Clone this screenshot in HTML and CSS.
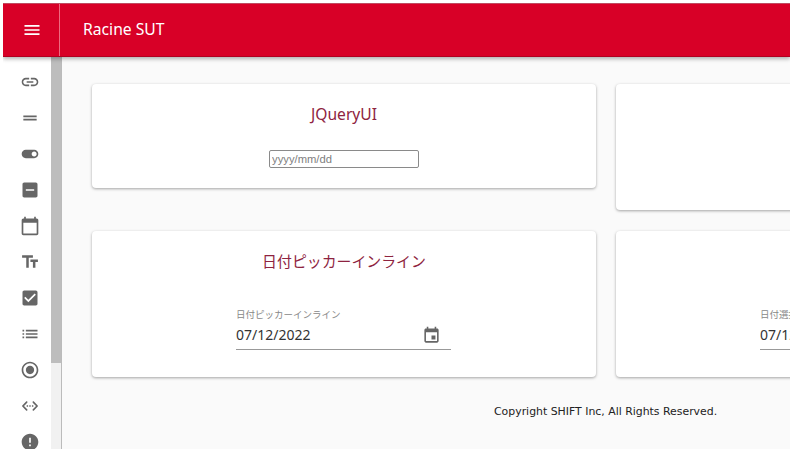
FILE: index.html
```html
<!DOCTYPE html>
<html lang="ja">
<head>
<meta charset="utf-8">
<title>Racine SUT</title>
<link rel="stylesheet" href="styles.css">
</head>
<body>
<div class="window">
  <header class="toolbar">
    <div class="menu-cell">
      <svg class="menu-icon" viewBox="0 0 24 24"><path d="M3 18h18v-2H3v2zm0-5h18v-2H3v2zm0-7v2h18V6H3z"/></svg>
    </div>
    <div class="brand">Racine SUT</div>
  </header>
  <div class="body">
    <nav class="nav">
      <svg class="nav-icon" viewBox="0 0 24 24"><path d="M3.9 12c0-1.71 1.39-3.1 3.1-3.1h4V7H7c-2.76 0-5 2.24-5 5s2.24 5 5 5h4v-1.9H7c-1.71 0-3.1-1.39-3.1-3.1zM8 13h8v-2H8v2zm9-6h-4v1.9h4c1.71 0 3.1 1.39 3.1 3.1s-1.39 3.1-3.1 3.1h-4V17h4c2.76 0 5-2.24 5-5s-2.24-5-5-5z"/></svg>
      <svg class="nav-icon" viewBox="0 0 24 24"><path d="M4 9h16v2H4zm0 4h16v2H4z"/></svg>
      <svg class="nav-icon" viewBox="0 0 24 24"><path d="M17 7H7c-2.76 0-5 2.24-5 5s2.24 5 5 5h10c2.76 0 5-2.24 5-5s-2.24-5-5-5zm0 8c-1.66 0-3-1.34-3-3s1.34-3 3-3 3 1.34 3 3-1.34 3-3 3z"/></svg>
      <svg class="nav-icon" viewBox="0 0 24 24"><path d="M19 3H5c-1.1 0-2 .9-2 2v14c0 1.1.9 2 2 2h14c1.1 0 2-.9 2-2V5c0-1.1-.9-2-2-2zm-2 10H7v-2h10v2z"/></svg>
      <svg class="nav-icon" viewBox="0 0 24 24"><path d="M20 3h-1V1h-2v2H7V1H5v2H4c-1.1 0-2 .9-2 2v16c0 1.1.9 2 2 2h16c1.1 0 2-.9 2-2V5c0-1.1-.9-2-2-2zm0 18H4V8h16v13z"/></svg>
      <svg class="nav-icon" viewBox="0 0 24 24"><path d="M2.5 4v3h5v12h3V7h5V4h-13zm19 5h-9v3h3v7h3v-7h3V9z"/></svg>
      <svg class="nav-icon" viewBox="0 0 24 24"><path d="M19 3H5c-1.11 0-2 .9-2 2v14c0 1.1.89 2 2 2h14c1.11 0 2-.9 2-2V5c0-1.1-.89-2-2-2zm-9 14l-5-5 1.41-1.41L10 14.17l7.59-7.59L19 8l-9 9z"/></svg>
      <svg class="nav-icon" viewBox="0 0 24 24"><path d="M3 13h2v-2H3v2zm0 4h2v-2H3v2zm0-8h2V7H3v2zm4 4h14v-2H7v2zm0 4h14v-2H7v2zM7 7v2h14V7H7z"/></svg>
      <svg class="nav-icon" viewBox="0 0 24 24"><path d="M12 7c-2.76 0-5 2.24-5 5s2.24 5 5 5 5-2.24 5-5-2.24-5-5-5zm0-5C6.48 2 2 6.48 2 12s4.48 10 10 10 10-4.48 10-10S17.52 2 12 2zm0 18c-4.42 0-8-3.58-8-8s3.58-8 8-8 8 3.58 8 8-3.58 8-8 8z"/></svg>
      <svg class="nav-icon" viewBox="0 0 24 24"><path d="M8.7 15.9L4.8 12l3.9-3.9c.39-.39.39-1.01 0-1.4-.39-.39-1.01-.39-1.4 0l-4.59 4.59c-.39.39-.39 1.02 0 1.41l4.59 4.6c.39.39 1.01.39 1.4 0 .39-.39.39-1.01 0-1.4zm6.6 0l3.9-3.9-3.9-3.9c-.39-.39-.39-1.01 0-1.4.39-.39 1.01-.39 1.4 0l4.59 4.59c.39.39.39 1.02 0 1.41l-4.59 4.6c-.39.39-1.01.39-1.4 0-.39-.39-.39-1.01 0-1.4zM8 12.8h1.7v-1.7H8zm3.15 0h1.7v-1.7h-1.7zm3.15 0H16v-1.7h-1.7z"/></svg>
      <svg class="nav-icon" viewBox="0 0 24 24"><path d="M12 2C6.48 2 2 6.48 2 12s4.48 10 10 10 10-4.48 10-10S17.52 2 12 2zm1 15h-2v-2h2v2zm0-4h-2V7h2v6z"/></svg>
    </nav>
    <div class="scrollbar"><div class="thumb"></div></div>
    <main class="main">
      <div class="cards">
        <section class="card card-a">
          <h2 class="card-title">JQueryUI</h2>
          <input class="plain-input" type="text" placeholder="yyyy/mm/dd">
        </section>
        <section class="card card-b"></section>
        <section class="card card-c">
          <h2 class="card-title card-title-ja">日付ピッカーインライン</h2>
          <div class="field">
            <div class="field-label">日付ピッカーインライン</div>
            <div class="field-row">
              <span class="field-value">07/12/2022</span>
              <svg class="field-icon" viewBox="0 0 24 24"><path d="M17 12h-5v5h5v-5zM16 1v2H8V1H6v2H5c-1.11 0-1.99.9-1.99 2L3 19c0 1.1.89 2 2 2h14c1.1 0 2-.9 2-2V5c0-1.1-.9-2-2-2h-1V1h-2zm3 18H5V8h14v11z"/></svg>
            </div>
          </div>
        </section>
        <section class="card card-c">
          <h2 class="card-title card-title-ja">&nbsp;</h2>
          <div class="field">
            <div class="field-label">日付選択</div>
            <div class="field-row">
              <span class="field-value">07/12/2022</span>
            </div>
          </div>
        </section>
      </div>
      <footer class="footer">Copyright SHIFT Inc, All Rights Reserved.</footer>
    </main>
  </div>
</div>
</body>
</html>
```

FILE: styles.css
```css
* { box-sizing: border-box; }
html, body { margin: 0; height: 100%; background: #fff; overflow: hidden; }
body { padding: 3px 10px 0 3px; font-family: "Noto Sans", "Noto Sans CJK JP", sans-serif; }
.window { width: 787px; height: 446px; display: flex; flex-direction: column; overflow: hidden; }
.toolbar {
  flex: none; height: 54px; display: flex; align-items: stretch; background: #d80027; color: #fff;
  box-shadow: 0 2px 4px rgba(0,0,0,.3); border-bottom: 1px solid #b00020; border-top: 1px solid #c04a60; position: relative; z-index: 2;
}
.menu-cell { width: 57px; flex: none; display: flex; align-items: center; justify-content: center; padding-left: 2px; border-right: 1px solid #ee6a80; }
.menu-icon { width: 20px; height: 20px; fill: #fff; }
.brand { padding: 0 0 2px 23px; display: flex; align-items: center; font-size: 15.7px; }
.body { flex: 1; display: flex; min-height: 0; }
.nav { width: 48px; flex: none; background: #fff; padding-top: 15px; display: flex; flex-direction: column; align-items: center; gap: 16px; padding-left: 6px; overflow: hidden; }
.nav-icon { width: 20px; height: 20px; flex: none; fill: #666; }
.scrollbar { width: 11px; flex: none; background: #f1f1f1; border-right: 1px solid #bbb; }
.thumb { height: 306px; background: #bdbdbd; }
.main { flex: 1; min-width: 0; background: #fafafa; padding: 27px 0 0 30px; overflow: hidden; }
.cards { display: grid; grid-template-columns: 504px 504px; column-gap: 20px; row-gap: 21px; align-items: start; }
.card { background: #fff; border-radius: 4px; box-shadow: 0 1px 3px rgba(0,0,0,.35); display: flex; flex-direction: column; align-items: center; }
.card-a { height: 104px; }
.card-b { height: 126px; }
.card-c { height: 146px; }
.card-title { margin: 18px 0 0; font-size: 15.6px; line-height: 24px; font-weight: 400; color: #8e2340; }
.card-title-ja { font-size: 14.9px; }
.plain-input { margin-top: 24px; width: 150px; height: 18px; padding: 0 2px; border: 1px solid #8a8a8a; border-radius: 2px; font-family: "Liberation Sans", sans-serif; font-size: 11.25px; background: #fff; }
.plain-input::placeholder { color: #808080; opacity: 1; }
.field { margin: 35px 1px 0 0; width: 215px; border-bottom: 1px solid #999; }
.field-label { font-size: 9.5px; line-height: 13px; color: #888; white-space: nowrap; }
.field-row { height: 28px; display: flex; align-items: center; justify-content: space-between; padding-right: 10px; }
.field-value { font-size: 14px; color: #333; margin-bottom: 2px; }
.field-icon { width: 19px; height: 19px; fill: #666; }
.footer { margin-top: 28px; padding-left: 402px; font-family: "DejaVu Sans", sans-serif; font-size: 10.9px; line-height: 14px; color: #222; white-space: nowrap; }
```
